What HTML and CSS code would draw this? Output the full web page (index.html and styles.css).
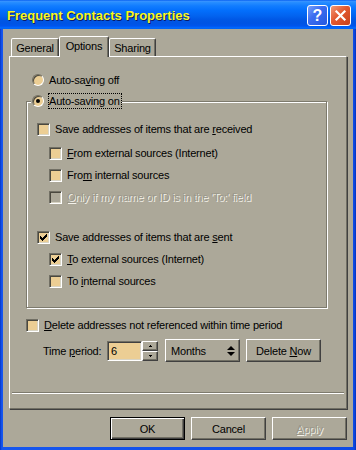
FILE: index.html
```html
<!DOCTYPE html>
<html>
<head>
<meta charset="utf-8">
<title>Frequent Contacts Properties</title>
<link rel="stylesheet" href="styles.css">
</head>
<body>
<div class="window">
  <div class="titlebar">
    <span class="title">Frequent Contacts Properties</span>
    <div class="title-buttons">
      <span class="tb-btn tb-help">?</span>
      <span class="tb-btn tb-close">
        <svg width="13" height="13" viewBox="0 0 13 13"><path d="M2.5 2.5 L10.5 10.5 M10.5 2.5 L2.5 10.5" stroke="#fff" stroke-width="2.2" stroke-linecap="square" fill="none"/></svg>
      </span>
    </div>
  </div>
  <div class="client">
    <div class="tabs">
      <div class="tab tab-general">General</div>
      <div class="tab tab-active">Options</div>
      <div class="tab tab-sharing">Sharing</div>
    </div>
    <div class="panel">
      <div class="option">
        <span class="radio"></span><span class="label">Auto-sa<u>v</u>ing off</span>
      </div>
      <div class="group">
        <div class="legend">
          <span class="radio checked"></span><span class="label focus">Auto-saving on</span>
        </div>
        <div class="check first"><span class="box"></span><span class="text">Save addresses of items that are <u>r</u>eceived</span></div>
        <div class="check sub sub-first"><span class="box"></span><span class="text"><u>F</u>rom external sources (Internet)</span></div>
        <div class="check sub"><span class="box"></span><span class="text">Fro<u>m</u> internal sources</span></div>
        <div class="check sub disabled"><span class="box"></span><span class="text"><u>O</u>nly if my name or ID is in the 'To:' field</span></div>
        <div class="check section"><span class="box"><svg class="tick" width="11" height="11" viewBox="0 0 11 11"><path d="M2 4H3V5H4V6H5V5H6V4H7V3H8V2H9V5H8V6H7V7H6V8H5V9H4V8H3V7H2Z" fill="#000"/></svg></span><span class="text">Save addresses of items that are <u>s</u>ent</span></div>
        <div class="check sub"><span class="box"><svg class="tick" width="11" height="11" viewBox="0 0 11 11"><path d="M2 4H3V5H4V6H5V5H6V4H7V3H8V2H9V5H8V6H7V7H6V8H5V9H4V8H3V7H2Z" fill="#000"/></svg></span><span class="text"><u>T</u>o external sources (Internet)</span></div>
        <div class="check sub"><span class="box"></span><span class="text">To <u>i</u>nternal sources</span></div>
      </div>
      <div class="check delete"><span class="box"></span><span class="text"><u>D</u>elete addresses not referenced within time period</span></div>
      <div class="time-row">
        <span class="time-label">Time <u>p</u>eriod:</span>
        <span class="edit">6</span>
        <span class="spin">
          <span class="spin-btn"><svg width="3" height="2" viewBox="0 0 3 2"><path d="M1 0H2V1H3V2H0V1H1Z" fill="#000"/></svg></span>
          <span class="spin-btn"><svg width="3" height="2" viewBox="0 0 3 2"><path d="M0 0H3V1H2V2H1V1H0Z" fill="#000"/></svg></span>
        </span>
        <span class="select"><span>Months</span><svg width="8" height="10" viewBox="0 0 8 10"><path d="M4 0 L8 4 L0 4 Z M0 6 L8 6 L4 10 Z" fill="#000"/></svg></span>
        <button class="btn delete-now"><span>Delete <u>N</u>ow</span></button>
      </div>
      <div class="separator"></div>
    </div>
    <div class="buttons">
      <button class="btn default"><span>OK</span></button>
      <button class="btn"><span>Cancel</span></button>
      <button class="btn disabled"><span><u>A</u>pply</span></button>
    </div>
  </div>
</div>
</body>
</html>
```
FILE: styles.css
```css
* { box-sizing: border-box; }
html, body { margin: 0; padding: 0; }
body {
  width: 356px;
  height: 450px;
  overflow: hidden;
  font-family: "Liberation Sans", Arial, sans-serif;
  font-size: 11px;
  letter-spacing: -0.2px;
  color: #000;
  background: #0a45dc;
}
.window {
  display: flex;
  flex-direction: column;
  width: 356px;
  height: 450px;
  background: linear-gradient(to right, #0631b8 0, #0d4ae6 1px, #1656ee 2px, #0d4ae6 354px, #0631b8 356px);
}
.titlebar {
  height: 29px;
  display: flex;
  align-items: center;
  padding: 2px 5px 0 7px;
  background: linear-gradient(to bottom, #0058ee 0%, #3a93ff 4%, #288eff 8%, #127dff 20%, #036ffc 36%, #0262ee 56%, #0057e5 68%, #0054e3 80%, #0055eb 88%, #005bf5 92%, #026afe 96%, #0062ef 100%);
}
.title {
  flex: 1;
  font: bold 13px "Liberation Sans", Arial, sans-serif;
  letter-spacing: 0;
  color: #f8f820;
  text-shadow: 1px 1px 0 #0a1a6a;
  white-space: nowrap;
}
.title-buttons { display: flex; gap: 2px; }
.tb-btn {
  width: 21px;
  height: 21px;
  border: 1px solid #fff;
  border-radius: 3px;
  display: flex;
  align-items: center;
  justify-content: center;
}
.tb-help {
  background: linear-gradient(135deg, #78a0fa 0%, #3d6ef0 40%, #2458e0 100%);
  color: #fff;
  font: bold 16px "Liberation Sans", Arial, sans-serif;
  letter-spacing: 0;
  line-height: 1;
}
.tb-close {
  background: linear-gradient(135deg, #f29a78 0%, #e2582f 45%, #c8421c 100%);
}
.client {
  flex: 1;
  margin: 0 3px 3px 3px;
  background: #aca899;
  padding: 7px 6px 0 6px;
  display: flex;
  flex-direction: column;
}
.tabs {
  display: flex;
  align-items: flex-start;
  height: 21px;
  margin: 0 0 -1px 2px;
}
.tab {
  height: 18px;
  margin-top: 2px;
  border: 1px solid;
  border-bottom: 0;
  border-color: #fff #404040 transparent #fff;
  box-shadow: inset -1px 0 0 #716f64;
  border-radius: 2px 2px 0 0;
  background: #aca899;
  display: flex;
  justify-content: center;
  align-items: center;
  padding-top: 1px;
  white-space: nowrap;
}
.tab-general { width: 48px; }
.tab-sharing { width: 47px; }
.tab-active {
  width: 50px;
  height: 21px;
  margin-top: 0;
  position: relative;
  z-index: 1;
  align-items: flex-start;
  padding-top: 2px;
  line-height: 14px;
}
.panel {
  border: 1px solid;
  border-color: #fff #716f64 #716f64 #fff;
  box-shadow: 1px 1px 0 #404040;
  padding: 0 0 14px 0;
  display: flex;
  flex-direction: column;
  align-items: flex-start;
}
.option {
  display: flex;
  align-items: center;
  height: 16px;
  margin: 15px 0 0 22px;
}
.radio {
  width: 12px;
  height: 12px;
  flex: none;
  border-radius: 50%;
  border: 1px solid;
  border-color: #716f64 #fff #fff #716f64;
  box-shadow: inset 1px 1px 0 #4a483f;
  background: #ecce94;
  margin-right: 4px;
  display: flex;
  align-items: center;
  justify-content: center;
}
.radio.checked::after {
  content: "";
  width: 4px;
  height: 4px;
  border-radius: 50%;
  background: #000;
}
.label {
  border: 1px dotted transparent;
  padding-right: 1px;
  line-height: 14px;
  white-space: nowrap;
}
.label.focus { border-color: #000; }
.group {
  margin: 13px 0 0 16px;
  width: 301px;
  border: 1px solid #7d7a6d;
  box-shadow: 1px 1px 0 #fff, inset 1px 1px 0 #fff;
  padding: 0 0 19px 0;
  display: flex;
  flex-direction: column;
  align-items: flex-start;
}
.legend {
  margin: -9px 0 0 4px;
  padding-left: 1px;
  background: #aca899;
  display: flex;
  align-items: center;
  height: 16px;
}
.check {
  display: flex;
  align-items: center;
  gap: 5px;
  height: 13px;
  margin: 9px 0 0 10px;
  line-height: 13px;
  white-space: nowrap;
}
.check.sub { margin-left: 22px; }
.check.first { margin-top: 14px; }
.check.sub-first { margin-top: 11px; }
.check.section { margin-top: 27px; }
.check.delete { margin: 11px 0 0 16px; }
.box {
  width: 13px;
  height: 13px;
  flex: none;
  border: 1px solid;
  border-color: #716f64 #fff #fff #716f64;
  box-shadow: inset 1px 1px 0 #4a483f, inset -1px -1px 0 #d8d4c4;
  background: #ecce94;
  display: flex;
}
.tick { display: block; shape-rendering: crispEdges; }
.check.disabled .box { background: #aca899; }
.check.disabled .text {
  color: #9a978a;
  text-shadow: 1px 1px 0 #f4f2ea;
}
.time-row {
  display: flex;
  align-items: flex-start;
  height: 23px;
  margin: 7px 0 0 33px;
}
.time-label {
  width: 64px;
  align-self: center;
  white-space: nowrap;
}
.edit {
  width: 35px;
  height: 20px;
  margin-top: 2px;
  border: 1px solid;
  border-color: #716f64 #fff #fff #716f64;
  box-shadow: inset 1px 1px 0 #404040, inset -1px -1px 0 #d8d4c4;
  background: #ecce94;
  padding-left: 3px;
  display: flex;
  align-items: center;
}
.spin {
  display: flex;
  flex-direction: column;
  width: 16px;
  height: 20px;
  margin-top: 2px;
}
.spin-btn {
  height: 10px;
  border: 1px solid;
  border-color: #fff #404040 #404040 #fff;
  box-shadow: inset -1px -1px 0 #716f64;
  background: #aca899;
  display: flex;
  align-items: center;
  justify-content: center;
}
.spin-btn svg { display: block; shape-rendering: crispEdges; }
.select {
  width: 75px;
  height: 23px;
  margin-left: 7px;
  display: flex;
  align-items: center;
  justify-content: space-between;
  padding: 0 4px 0 5px;
  border: 1px solid;
  border-color: #fff #404040 #404040 #fff;
  box-shadow: inset -1px -1px 0 #716f64;
  background: #aca899;
}
.btn {
  width: 75px;
  height: 23px;
  padding: 0;
  margin: 0;
  font: inherit;
  letter-spacing: inherit;
  color: #000;
  display: flex;
  align-items: center;
  justify-content: center;
  border: 1px solid;
  border-color: #fff #404040 #404040 #fff;
  border-radius: 0;
  box-shadow: inset -1px -1px 0 #716f64;
  background: #aca899;
  white-space: nowrap;
}
.delete-now { margin-left: 6px; }
.btn.default {
  border-color: #000;
  box-shadow: inset 1px 1px 0 #fff, inset -1px -1px 0 #404040, inset -2px -2px 0 #716f64;
}
.btn.disabled {
  color: #9a978a;
  text-shadow: 1px 1px 0 #f4f2ea;
}
.separator {
  margin: 30px 0 0 2px;
  width: 332px;
  height: 2px;
  border-top: 1px solid #7d7a6d;
  border-bottom: 1px solid #fff;
}
.buttons {
  display: flex;
  justify-content: flex-end;
  gap: 6px;
  margin-top: 8px;
}
```
